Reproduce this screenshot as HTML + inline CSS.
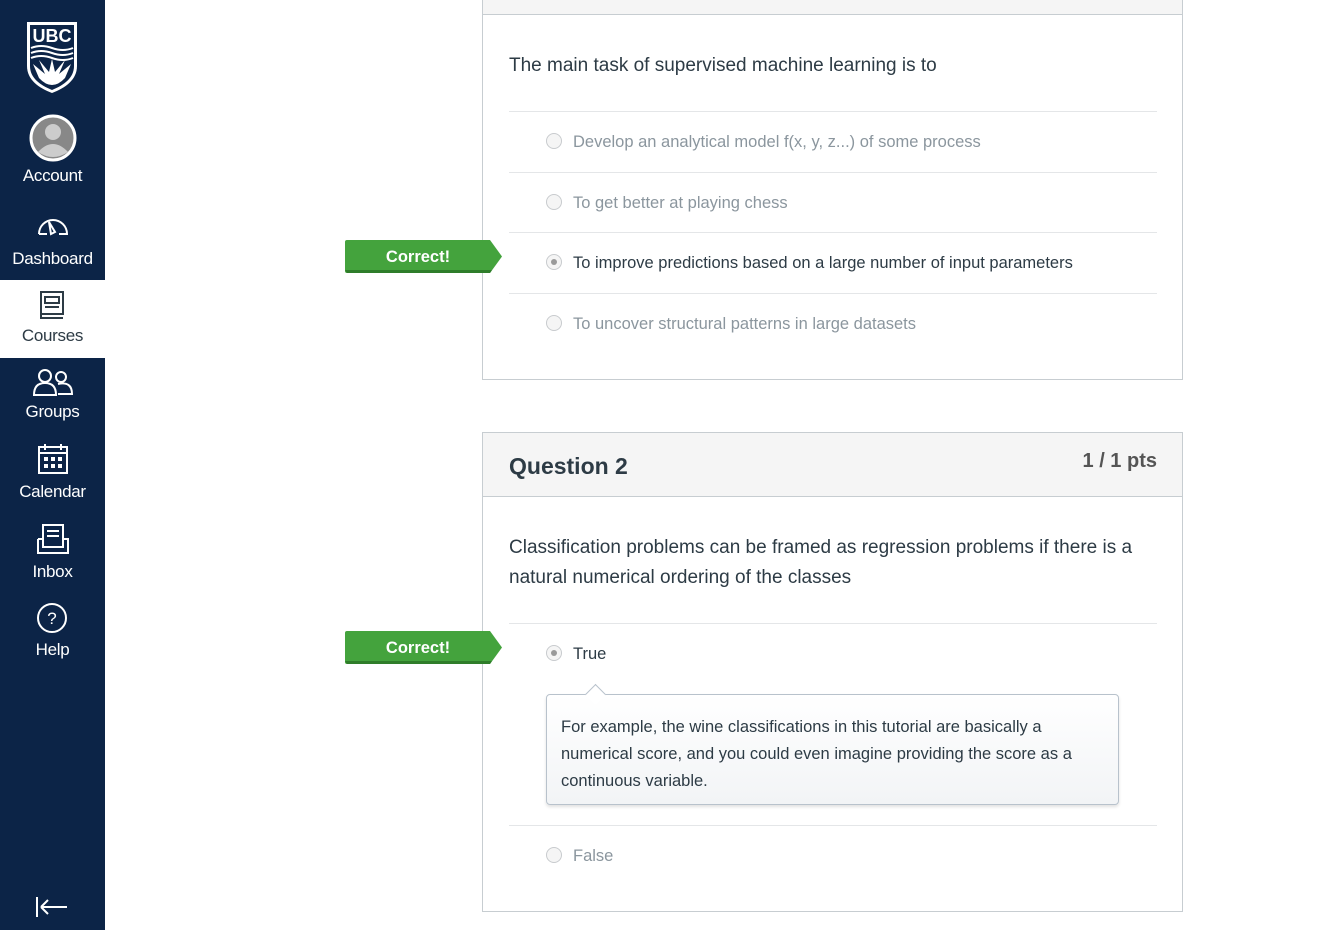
<!DOCTYPE html>
<html><head><style>
*{margin:0;padding:0;box-sizing:border-box}
body{width:1338px;height:930px;background:#fff;font-family:"Liberation Sans",sans-serif;position:relative;overflow:hidden;color:#2d3b45}
.nav{position:absolute;left:0;top:0;width:105px;height:930px;background:#0c2447}
.it{position:absolute;left:0;width:105px;text-align:center;color:#fff;font-size:17px;letter-spacing:-0.3px}
.card{position:absolute;left:482px;width:701px;border:1px solid #c7cdd1;background:#fff}
.q{position:absolute;left:509px;font-size:19px;color:#2d3b45;line-height:30px}
.ans{position:absolute;left:509px;width:648px;border-top:1px solid #e4e6e8;height:61px}
.ans .r{position:absolute;left:37px;top:21px;width:16px;height:16px;border-radius:50%;border:1px solid #c8cbce;background:#f5f5f5}
.ans .r.s::after{content:"";position:absolute;left:4px;top:4px;width:6px;height:6px;border-radius:50%;background:#9a9a9a}
.ans span{position:absolute;left:64px;top:21px;font-size:16.5px;color:#8b969e}
.ans.c span{color:#2d3b45}
.badge{position:absolute;left:345px;width:157px;height:33px}
</style></head><body>
<div class="nav">
<svg style="position:absolute;left:25px;top:20px" width="54" height="74" viewBox="0 0 54 74"><path d="M2 2H52V46C52 60 40 68 27 73C14 68 2 60 2 46Z" fill="#fff"/><path d="M5 5H49V46C49 58 39 65 27 70C15 65 5 58 5 46Z" fill="#0c2447"/><text x="27" y="22" text-anchor="middle" fill="#fff" font-size="18" font-weight="bold" font-family="Liberation Sans">UBC</text><path d="M6 28Q16 24 27 28T48 28M6 33Q16 29 27 33T48 33M6 38Q16 34 27 38T48 38" stroke="#fff" stroke-width="2" fill="none"/><path d="M8 44L20 54L14 40L24 52L27 39L30 52L40 40L34 54L46 44L40 58Q27 72 14 58Z" fill="#fff"/></svg>
<svg style="position:absolute;left:29px;top:114px" width="48" height="48"><circle cx="24" cy="24" r="22" fill="#888" stroke="#fff" stroke-width="3"/><circle cx="24" cy="18" r="8" fill="#ccc"/><path d="M9 38Q24 22 39 38Q24 48 9 38Z" fill="#ccc"/></svg>
<div class="it" style="top:166px">Account</div>
<svg style="position:absolute;left:35px;top:212px" width="36" height="24" viewBox="0 0 36 24"><path d="M4 22A14 14 0 1 1 32 22H24M4 22H12" stroke="#fff" stroke-width="2" fill="none"/><path d="M14 10L20 20L16 22Z" stroke="#fff" stroke-width="2" fill="none"/></svg>
<div class="it" style="top:249px">Dashboard</div>
<div style="position:absolute;left:0;top:280px;width:105px;height:78px;background:#fff"></div>
<svg style="position:absolute;left:39px;top:290px" width="26" height="30" viewBox="0 0 26 30"><rect x="2" y="2" width="22" height="22" fill="none" stroke="#2d3b45" stroke-width="2"/><path d="M2 24V28H24" stroke="#2d3b45" stroke-width="2" fill="none"/><rect x="6" y="7" width="14" height="6" fill="none" stroke="#2d3b45" stroke-width="2"/><path d="M6 17H20" stroke="#2d3b45" stroke-width="2"/></svg>
<div class="it" style="top:326px;color:#2d3b45">Courses</div>
<svg style="position:absolute;left:32px;top:367px" width="42" height="30" viewBox="0 0 42 30"><circle cx="13" cy="9" r="6" fill="none" stroke="#fff" stroke-width="2"/><path d="M2 28Q2 16 13 16Q24 16 24 28Z" fill="none" stroke="#fff" stroke-width="2"/><circle cx="29" cy="10" r="5" fill="none" stroke="#fff" stroke-width="2"/><path d="M26 17Q40 14 40 27H26" fill="none" stroke="#fff" stroke-width="2"/></svg>
<div class="it" style="top:402px">Groups</div>
<svg style="position:absolute;left:37px;top:443px" width="32" height="32"><rect x="2" y="4" width="28" height="26" fill="none" stroke="#fff" stroke-width="2"/><path d="M2 10H30M8 1V7M24 1V7" stroke="#fff" stroke-width="2"/><g fill="#fff"><rect x="7" y="14" width="4" height="4"/><rect x="14" y="14" width="4" height="4"/><rect x="21" y="14" width="4" height="4"/><rect x="7" y="21" width="4" height="4"/><rect x="14" y="21" width="4" height="4"/><rect x="21" y="21" width="4" height="4"/></g></svg>
<div class="it" style="top:482px">Calendar</div>
<svg style="position:absolute;left:36px;top:523px" width="34" height="32"><rect x="7" y="2" width="20" height="22" fill="none" stroke="#fff" stroke-width="2"/><path d="M11 8H23M11 13H23M2 16V30H32V16H27M2 16H7M12 24H22" stroke="#fff" stroke-width="2" fill="none"/></svg>
<div class="it" style="top:562px">Inbox</div>
<svg style="position:absolute;left:36px;top:602px" width="32" height="32"><circle cx="16" cy="16" r="14" fill="none" stroke="#fff" stroke-width="2"/><text x="16" y="22" text-anchor="middle" fill="#fff" font-size="17" font-family="Liberation Sans">?</text></svg>
<div class="it" style="top:640px">Help</div>
<svg style="position:absolute;left:35px;top:895px" width="34" height="24"><path d="M2 2V22M6 12H32M6 12L13 5M6 12L13 19" stroke="#fff" stroke-width="2" fill="none"/></svg>
</div>

<div class="card" style="top:-2px;height:382px"><div style="height:16px;background:#f5f5f5;border-bottom:1px solid #c7cdd1"></div></div>
<div class="q" style="top:51px">The main task of supervised machine learning is to</div>
<div class="ans" style="top:111px"><div class="r"></div><span>Develop an analytical model f(x, y, z...) of some process</span></div>
<div class="ans" style="top:172px"><div class="r"></div><span>To get better at playing chess</span></div>
<div class="ans c" style="top:232px"><div class="r s"></div><span>To improve predictions based on a large number of input parameters</span></div>
<div class="ans" style="top:293px"><div class="r"></div><span>To uncover structural patterns in large datasets</span></div>

<div class="card" style="top:432px;height:480px"><div style="height:64px;background:#f5f5f5;border-bottom:1px solid #c7cdd1"></div></div>
<div style="position:absolute;left:509px;top:453px;font-size:23px;font-weight:bold;color:#2d3b45">Question 2</div>
<div style="position:absolute;right:181px;top:450px;font-size:20px;font-weight:bold;color:#555">1 / 1 pts</div>
<div class="q" style="top:533px;width:650px">Classification problems can be framed as regression problems if there is a natural numerical ordering of the classes</div>
<div class="ans c" style="top:623px;height:202px"><div class="r s"></div><span>True</span>
<div style="position:absolute;left:37px;top:70px;width:573px;height:111px;border:1px solid #b8c2cc;border-radius:4px;background:linear-gradient(#fff,#f2f4f6);box-shadow:0 2px 3px rgba(0,0,0,.12);padding:19px 14px 0;font-size:16.5px;line-height:27px;color:#2d3b45">For example, the wine classifications in this tutorial are basically a numerical score, and you could even imagine providing the score as a continuous variable.</div>
<div style="position:absolute;left:79px;top:63px;width:15px;height:15px;background:#fff;border-left:1px solid #b8c2cc;border-top:1px solid #b8c2cc;transform:rotate(45deg)"></div>
</div>
<div class="ans" style="top:825px"><div class="r"></div><span>False</span></div>

<svg class="badge" style="top:240px" viewBox="0 0 157 33"><path d="M2 0H145L157 16.5L145 33H2Q0 33 0 31V2Q0 0 2 0Z" fill="#44a33d"/><path d="M0 30H147L145 33H2Z" fill="#2f7d2a"/><text x="73" y="22" text-anchor="middle" fill="#fff" font-weight="bold" font-size="16.5" font-family="Liberation Sans">Correct!</text></svg>
<svg class="badge" style="top:631px" viewBox="0 0 157 33"><path d="M2 0H145L157 16.5L145 33H2Q0 33 0 31V2Q0 0 2 0Z" fill="#44a33d"/><path d="M0 30H147L145 33H2Z" fill="#2f7d2a"/><text x="73" y="22" text-anchor="middle" fill="#fff" font-weight="bold" font-size="16.5" font-family="Liberation Sans">Correct!</text></svg>
</body></html>
